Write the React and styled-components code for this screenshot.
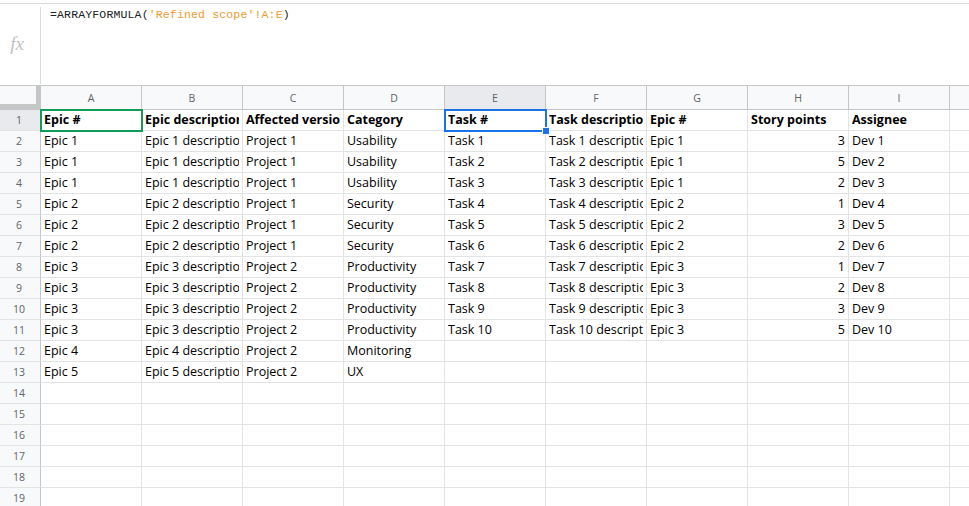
import React from 'react'
import styled, { createGlobalStyle } from 'styled-components'

const GlobalStyle = createGlobalStyle`
  body {
    margin: 0;
    background: #fff;
    font-family: 'Open Sans', 'Noto Sans', sans-serif;
  }
`

const Page = styled.div`
  width: 969px;
  height: 506px;
  overflow: hidden;
  background: #fff;
`

const FormulaBar = styled.div`
  padding-top: 3px;
  height: 85px;
  box-sizing: border-box;
`

const FormulaInner = styled.div`
  display: flex;
  height: 100%;
  border-top: 1px solid #dadce0;
`

const FxBox = styled.div`
  width: 40px;
  display: flex;
  align-items: center;
  justify-content: center;
  color: #bdc1c6;
  font-family: 'Liberation Serif', 'DejaVu Serif', serif;
  font-style: italic;
  font-size: 19px;
  padding-right: 6px;
  padding-bottom: 2px;
  box-sizing: border-box;
`

const Divider = styled.div`
  width: 1px;
  margin: 3px 0 2px;
  background: #dadce0;
`

const FormulaText = styled.div`
  padding: 4px 0 0 9px;
  font-family: 'Liberation Mono', 'DejaVu Sans Mono', monospace;
  font-size: 11.5px;
  line-height: 14px;
  letter-spacing: 0.15px;
  color: #202124;
  white-space: pre;
`

const Ref = styled.span`
  color: #f29a2e;
`

const Grid = styled.div`
  display: grid;
  grid-template-columns: 41px repeat(10, 101px);
  grid-template-rows: 24px;
  grid-auto-rows: 21px;
  border-top: 1px solid #c4c7c5;
`

const Corner = styled.div`
  box-sizing: border-box;
  background: #f8f9fa;
  border-right: 5px solid #c4c7c5;
  border-bottom: 6px solid #c4c7c5;
`

const ColHead = styled.div`
  box-sizing: border-box;
  display: flex;
  align-items: center;
  justify-content: center;
  background: ${p => (p.$active ? '#e8eaed' : '#f8f9fa')};
  border-right: 1px solid #c4c7c5;
  border-bottom: 1px solid #c4c7c5;
  color: #5f6368;
  font-size: 10.5px;
  padding-top: 1px;
`

const RowHead = styled.div`
  box-sizing: border-box;
  display: flex;
  align-items: center;
  justify-content: center;
  background: ${p => (p.$active ? '#e8eaed' : '#f8f9fa')};
  border-right: 1px solid #c4c7c5;
  border-bottom: 1px solid #e2e3e3;
  color: #5f6368;
  font-size: 10.5px;
  padding-right: 2px;
`

const Cell = styled.div`
  position: relative;
  box-sizing: border-box;
  border-right: 1px solid #e2e3e3;
  border-bottom: 1px solid #e2e3e3;
  padding: 0 3px 0 3px;
  font-size: 12.5px;
  line-height: 20px;
  color: #000;
  font-weight: ${p => (p.$bold ? 700 : 400)};
  text-align: ${p => (p.$num ? 'right' : 'left')};
  white-space: nowrap;
  overflow: ${p => (p.$sel ? 'visible' : 'hidden')};
  z-index: ${p => (p.$sel ? 2 : 0)};

  ${p =>
    p.$sel &&
    `
    &::after {
      content: '';
      position: absolute;
      left: -1px;
      top: -1px;
      right: -2px;
      bottom: -2px;
      border: 2px solid ${p.$sel};
      pointer-events: none;
    }
  `}
`

const ClipText = styled.span`
  display: block;
  overflow: hidden;
`

const Handle = styled.span`
  position: absolute;
  right: -5px;
  bottom: -5px;
  width: 6px;
  height: 6px;
  background: #1a73e8;
  border: 1px solid #fff;
  z-index: 3;
`

const cols = ['A', 'B', 'C', 'D', 'E', 'F', 'G', 'H', 'I', 'J']

const head = ['Epic #', 'Epic description', 'Affected version', 'Category', 'Task #', 'Task description', 'Epic #', 'Story points', 'Assignee', '']

const tasks = [
  [1, 'Project 1', 'Usability', 1, 3],
  [1, 'Project 1', 'Usability', 2, 5],
  [1, 'Project 1', 'Usability', 3, 2],
  [2, 'Project 1', 'Security', 4, 1],
  [2, 'Project 1', 'Security', 5, 3],
  [2, 'Project 1', 'Security', 6, 2],
  [3, 'Project 2', 'Productivity', 7, 1],
  [3, 'Project 2', 'Productivity', 8, 2],
  [3, 'Project 2', 'Productivity', 9, 3],
  [3, 'Project 2', 'Productivity', 10, 5],
]

const rows = [
  head,
  ...tasks.map(([e, proj, cat, t, pts]) => [
    `Epic ${e}`,
    `Epic ${e} description`,
    proj,
    cat,
    `Task ${t}`,
    `Task ${t} description`,
    `Epic ${e}`,
    String(pts),
    `Dev ${t}`,
    '',
  ]),
  ['Epic 4', 'Epic 4 description', 'Project 2', 'Monitoring', '', '', '', '', '', ''],
  ['Epic 5', 'Epic 5 description', 'Project 2', 'UX', '', '', '', '', '', ''],
]

while (rows.length < 19) rows.push(Array(10).fill(''))

const selection = {
  '0-0': '#0f9d58',
  '0-4': '#1a73e8',
}

const App = () => {
  return (
    <Page>
      <GlobalStyle />
      <FormulaBar>
        <FormulaInner>
          <FxBox>fx</FxBox>
          <Divider />
          <FormulaText>
            =ARRAYFORMULA(<Ref>'Refined scope'!A:E</Ref>)
          </FormulaText>
        </FormulaInner>
      </FormulaBar>

      <Grid>
        <Corner />
        {cols.map(c => (
          <ColHead key={c} $active={c === 'E'}>{c}</ColHead>
        ))}

        {rows.map((row, r) => (
          <React.Fragment key={r}>
            <RowHead $active={r === 0}>{r + 1}</RowHead>
            {row.map((val, c) => {
              const sel = selection[`${r}-${c}`]
              return (
                <Cell key={c} $bold={r === 0} $num={r > 0 && c === 7} $sel={sel}>
                  <ClipText>{val}</ClipText>
                  {sel === '#1a73e8' && <Handle />}
                </Cell>
              )
            })}
          </React.Fragment>
        ))}
      </Grid>
    </Page>
  )
}

export default App
